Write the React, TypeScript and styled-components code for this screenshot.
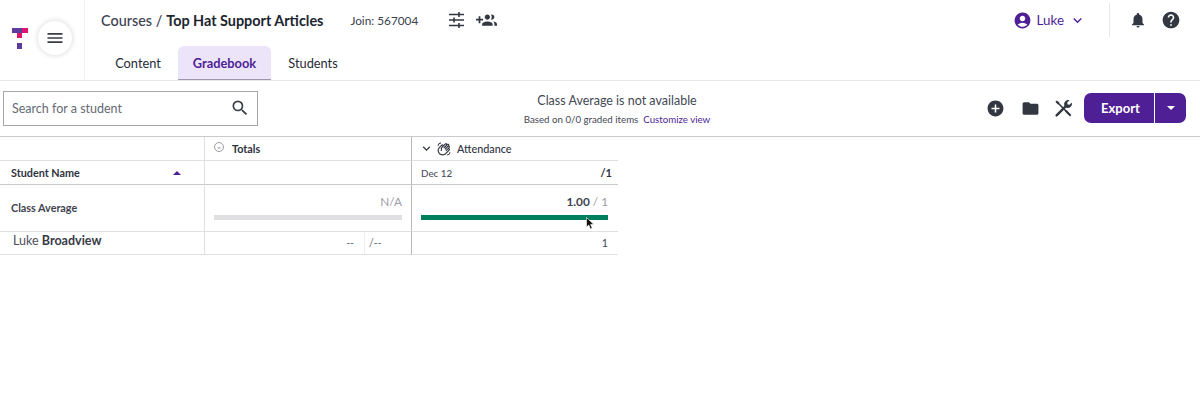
import * as React from "react"
import styled, { createGlobalStyle } from "styled-components"
import {
  MdAccountCircle,
  MdAddCircle,
  MdExpandMore,
  MdFolder,
  MdHelp,
  MdMenu,
  MdNotifications,
  MdOutlineWavingHand,
  MdSearch,
} from "react-icons/md"

const purple = "#4f1f96"
const ink = "#2e3340"
const line = "#dfe0e3"

const GlobalStyle = createGlobalStyle`
  html, body {
    margin: 0;
    background: #fff;
    color: ${ink};
    font-family: Lato, "Noto Sans", sans-serif;
  }
  * { box-sizing: border-box; }
`

const Page = styled.div`
  position: relative;
  width: 1200px;
  height: 403px;
  overflow: hidden;
`

const Header = styled.header`
  display: flex;
  height: 81px;
  border-bottom: 1px solid #e6e7ea;
`

const Brand = styled.div`
  display: flex;
  align-items: flex-start;
  width: 85px;
  padding: 20px 0 0 12px;
  border-right: 1px solid #f0f0f2;
`

const LogoSlot = styled.span`
  padding-top: 8px;
`

const MenuButton = styled.button`
  display: flex;
  align-items: center;
  justify-content: center;
  width: 36px;
  height: 36px;
  margin-left: 9px;
  padding: 0;
  border: 1px solid #eeeef0;
  border-radius: 50%;
  background: #fff;
  box-shadow: 0 0 5px rgba(0, 0, 0, 0.12);
  color: #3a3d45;
  font-size: 20px;
`

const HeaderMain = styled.div`
  flex: 1;
  display: flex;
  flex-direction: column;
`

const TopRow = styled.div`
  display: flex;
  align-items: center;
  height: 46px;
  padding: 0 19px 6px 16px;
`

const Crumb = styled.span`
  font-size: 14.4px;
  font-weight: 500;
  color: #3c4250;
`

const CourseName = styled.span`
  margin-left: 4px;
  font-size: 14.4px;
  font-weight: 700;
  color: #20242e;
`

const JoinCode = styled.span`
  margin-left: 27px;
  font-size: 11.8px;
  color: #3c4250;
`

const HeaderIcon = styled.span<{ $gap?: number; $size?: number; $color?: string }>`
  display: inline-flex;
  margin-left: ${(p) => p.$gap ?? 0}px;
  font-size: ${(p) => p.$size ?? 20}px;
  color: ${(p) => p.$color ?? "#333742"};
`

const UserMenu = styled.div`
  display: flex;
  align-items: center;
  margin-left: auto;
  color: ${purple};
  font-size: 13.4px;
  gap: 5px;
`

const Divider = styled.div`
  width: 1px;
  height: 34px;
  margin: 0 19px 0 23px;
  background: #e8e8ea;
`

const Tabs = styled.nav`
  display: flex;
  padding-left: 14px;
`

const Tab = styled.div<{ $active?: boolean; $width: number }>`
  display: flex;
  align-items: center;
  justify-content: center;
  height: 34px;
  width: ${(p) => p.$width}px;
  margin-left: ${(p) => (p.$active ? 1 : 0)}px;
  border-radius: 6px 6px 0 0;
  font-size: 12.8px;
  font-weight: ${(p) => (p.$active ? 700 : 400)};
  color: ${(p) => (p.$active ? purple : "#262a35")};
  background: ${(p) => (p.$active ? "#ece4f8" : "transparent")};
  border-bottom: ${(p) => (p.$active ? "1px solid #9d98a8" : "none")};
`

const Toolbar = styled.div`
  display: grid;
  grid-template-columns: 1fr auto 1fr;
  align-items: center;
  height: 56px;
  padding: 0 14px 1px 3px;
  border-bottom: 1px solid #c9cacd;
`

const SearchBox = styled.div`
  display: flex;
  align-items: center;
  justify-content: space-between;
  width: 255px;
  height: 35px;
  padding: 0 7px 0 8px;
  border: 1px solid #a4a6ab;
  font-size: 12.5px;
  color: #666a74;
`

const SearchIcon = styled(MdSearch)`
  font-size: 20px;
  color: #3a3d45;
`

const Summary = styled.div`
  display: flex;
  flex-direction: column;
  align-items: center;
  gap: 2px;
  margin: 1px 0 0 45px;
`

const SummaryTitle = styled.div`
  font-size: 12.5px;
  line-height: 18px;
  color: #434853;
`

const SummaryNote = styled.div`
  font-size: 9.7px;
  line-height: 14px;
  color: #434853;
`

const CustomizeLink = styled.span`
  margin-left: 5px;
  color: ${purple};
`

const Actions = styled.div`
  display: flex;
  align-items: center;
  justify-content: flex-end;
`

const ExportGroup = styled.div`
  display: flex;
  height: 30px;
  margin-left: 11px;
  border-radius: 7px;
  overflow: hidden;
  background: ${purple};
  color: #fff;
`

const ExportButton = styled.div`
  display: flex;
  align-items: center;
  justify-content: center;
  width: 71px;
  padding-left: 3px;
  border-right: 1px solid #fff;
  font-size: 13px;
  font-weight: 700;
`

const ExportCaret = styled.div`
  display: flex;
  align-items: center;
  justify-content: center;
  width: 31px;

  &::after {
    content: "";
    border-left: 4px solid transparent;
    border-right: 4px solid transparent;
    border-top: 4px solid #fff;
  }
`

const Grid = styled.div`
  display: grid;
  grid-template-columns: 205px 207px 206px;
  grid-template-rows: 24px 24px 47px 23px;
`

const Cell = styled.div<{ $strong?: boolean; $padded?: boolean }>`
  display: flex;
  align-items: center;
  min-width: 0;
  padding: ${(p) => (p.$padded ? "0 6px 0 9px" : "0")};
  border-right: 1px solid ${line};
  border-bottom: 1px solid ${(p) => (p.$strong ? "#c9cacd" : line)};

  &:nth-child(3n) {
    border-right: none;
  }
`

const GradeBorderCell = styled(Cell)`
  border-right-color: #b9babd;
`

const AverageCell = styled(GradeBorderCell)`
  padding: 0 9px;
`

const ClassScoreCell = styled(Cell)`
  padding: 0 10px 0 9px;
`

const HeaderLabel = styled.span<{ $indent?: number; $medium?: boolean }>`
  margin-left: ${(p) => p.$indent ?? 0}px;
  font-size: 10.8px;
  font-weight: ${(p) => (p.$medium ? 500 : 700)};
  color: #2e3340;
`

const SortCaret = styled.span`
  margin-left: auto;
  margin-right: 17px;
  border-left: 4px solid transparent;
  border-right: 4px solid transparent;
  border-bottom: 4px solid ${purple};
`

const TotalsIcon = styled.span`
  display: inline-flex;
  align-items: center;
  justify-content: center;
  width: 10px;
  height: 10px;
  margin: 0 8px 3px 0;
  border: 1px solid #9a9ca2;
  border-radius: 50%;
  font-size: 7px;
  line-height: 1;
  color: #9a9ca2;
`

const DateLabel = styled.span`
  font-size: 9.8px;
  font-weight: 500;
  color: #4a4e59;
`

const PointsLabel = styled.span`
  margin-left: auto;
  font-size: 11px;
  font-weight: 700;
  color: #2e3340;
`

const AverageLabel = styled.span`
  padding-left: 11px;
  margin-bottom: 1px;
  font-size: 10.8px;
  font-weight: 700;
  color: #3f4450;
`

const StudentLabel = styled.span`
  padding-left: 13px;
  margin-bottom: 6px;
  font-size: 12.5px;
  color: #4a4e59;
`

const StudentSurname = styled.span`
  font-weight: 700;
  color: #363a46;
`

const AverageBlock = styled.div`
  display: flex;
  flex-direction: column;
  width: 100%;
  gap: 4px;
  margin-bottom: 3px;
`

const AverageValue = styled.div`
  height: 18px;
  text-align: right;
  font-size: 11.8px;
  line-height: 17px;
  color: #9a9da4;
`

const AverageScore = styled.span`
  font-weight: 700;
  color: #3f4450;
`

const Bar = styled.div<{ $fill: string }>`
  height: 5px;
  background: ${(p) => p.$fill};
`

const TotalRow = styled.div`
  display: grid;
  grid-template-columns: 160px 1fr;
  width: 100%;
  height: 100%;
  font-size: 10.6px;
  color: #686c76;
`

const TotalValue = styled.span`
  display: flex;
  align-items: center;
  justify-content: flex-end;
  padding-right: 10px;
  border-right: 1px solid #ecedef;
`

const TotalMax = styled.span`
  display: flex;
  align-items: center;
  padding-left: 4px;
`

const Score = styled.span`
  margin-left: auto;
  margin-right: 4px;
  font-size: 10.6px;
  color: #434853;
`

const Cursor = styled.svg`
  position: absolute;
  left: 586px;
  top: 217px;
  width: 9px;
  height: 13px;
`

const Logo = () => (
  <svg width="16" height="21" viewBox="0 0 16 21" aria-label="Top Hat">
    <rect x="0" y="0" width="10" height="5" fill="#5d3c9d" />
    <rect x="10" y="0" width="6" height="5" fill="#e0146a" />
    <rect x="5" y="5" width="5" height="5" fill="#e0146a" />
    <rect x="5" y="15" width="5" height="6" fill="#5d3c9d" />
  </svg>
)

const TuneIcon = () => (
  <svg width="20" height="20" viewBox="0 0 20 20" stroke="currentColor" fill="none">
    <path d="M2 4.5h15M2 10h15M2 15.5h15" strokeWidth="1.6" />
    <path d="M12 2v5M7 7.5v5M12 13v5" strokeWidth="1.6" />
  </svg>
)

const GroupAddIcon = () => (
  <svg width="21" height="21" viewBox="0 0 24 24" fill="currentColor">
    <path d="M8 10H5V7H3v3H0v2h3v3h2v-3h3v-2zm10 1c1.66 0 2.99-1.34 2.99-3S19.66 5 18 5c-.32 0-.63.05-.91.14.57.81.9 1.79.9 2.86s-.34 2.04-.9 2.86c.28.09.59.14.91.14zm-5 0c1.66 0 2.99-1.34 2.99-3S14.66 5 13 5s-3 1.34-3 3 1.34 3 3 3zm6.62 2.16c.83.73 1.38 1.66 1.38 2.84v2h3v-2c0-1.54-2.37-2.49-4.38-2.84zM13 13c-2 0-6 1-6 3v2h12v-2c0-2-4-3-6-3z" />
  </svg>
)

const ToolsIcon = () => (
  <svg width="19" height="19" viewBox="0 0 19 19" fill="currentColor" stroke="currentColor">
    <path d="M2.6 16.4 L11.4 7.6" strokeWidth="2.4" strokeLinecap="round" fill="none" />
    <path d="M3 3 L15.6 15.6" strokeWidth="1.5" fill="none" />
    <path d="M1.4 2.8 L2.8 1.4 L5.6 3.8 L3.8 5.6 Z" stroke="none" />
    <path d="M12.4 11 L17.4 16 L16 17.4 L11 12.4 Z" stroke="none" />
    <path
      d="M17.8 3.4 L15.4 5.8 L13.6 5.4 L13.2 3.6 L15.6 1.2 A4.4 4.4 0 0 0 10.2 6.6 L12.4 8.8 A4.4 4.4 0 0 0 17.8 3.4 Z"
      stroke="none"
    />
  </svg>
)

export default function App() {
  return (
    <Page>
      <GlobalStyle />
      <Header>
        <Brand>
          <LogoSlot>
            <Logo />
          </LogoSlot>
          <MenuButton>
            <MdMenu />
          </MenuButton>
        </Brand>
        <HeaderMain>
          <TopRow>
            <Crumb>Courses</Crumb>
            <Crumb>&nbsp;/</Crumb>
            <CourseName>Top Hat Support Articles</CourseName>
            <JoinCode>Join: 567004</JoinCode>
            <HeaderIcon $gap={29}>
              <TuneIcon />
            </HeaderIcon>
            <HeaderIcon $gap={9}>
              <GroupAddIcon />
            </HeaderIcon>
            <UserMenu>
              <HeaderIcon $size={19} $color={purple}>
                <MdAccountCircle />
              </HeaderIcon>
              Luke
              <HeaderIcon $size={17} $color={purple}>
                <MdExpandMore />
              </HeaderIcon>
            </UserMenu>
            <Divider />
            <HeaderIcon $size={18}>
              <MdNotifications />
            </HeaderIcon>
            <HeaderIcon $gap={14} $size={20}>
              <MdHelp />
            </HeaderIcon>
          </TopRow>
          <Tabs>
            <Tab $width={78}>Content</Tab>
            <Tab $width={93} $active>
              Gradebook
            </Tab>
            <Tab $width={84}>Students</Tab>
          </Tabs>
        </HeaderMain>
      </Header>
      <Toolbar>
        <SearchBox>
          Search for a student
          <SearchIcon />
        </SearchBox>
        <Summary>
          <SummaryTitle>Class Average is not available</SummaryTitle>
          <SummaryNote>
            Based on 0/0 graded items
            <CustomizeLink>Customize view</CustomizeLink>
          </SummaryNote>
        </Summary>
        <Actions>
          <HeaderIcon $size={19}>
            <MdAddCircle />
          </HeaderIcon>
          <HeaderIcon $gap={16} $size={19}>
            <MdFolder />
          </HeaderIcon>
          <HeaderIcon $gap={14}>
            <ToolsIcon />
          </HeaderIcon>
          <ExportGroup>
            <ExportButton>Export</ExportButton>
            <ExportCaret />
          </ExportGroup>
        </Actions>
      </Toolbar>
      <Grid>
        <Cell />
        <GradeBorderCell $padded>
          <TotalsIcon>=</TotalsIcon>
          <HeaderLabel>Totals</HeaderLabel>
        </GradeBorderCell>
        <Cell $padded>
          <HeaderIcon $gap={-2} $size={15}>
            <MdExpandMore />
          </HeaderIcon>
          <HeaderIcon $gap={3} $size={14}>
            <MdOutlineWavingHand />
          </HeaderIcon>
          <HeaderLabel $indent={6} $medium>
            Attendance
          </HeaderLabel>
        </Cell>

        <Cell $strong $padded>
          <HeaderLabel $indent={2}>Student Name</HeaderLabel>
          <SortCaret />
        </Cell>
        <GradeBorderCell $strong />
        <Cell $strong $padded>
          <DateLabel>Dec 12</DateLabel>
          <PointsLabel>/1</PointsLabel>
        </Cell>

        <Cell>
          <AverageLabel>Class Average</AverageLabel>
        </Cell>
        <AverageCell>
          <AverageBlock>
            <AverageValue>N/A</AverageValue>
            <Bar $fill="#e0e0e2" />
          </AverageBlock>
        </AverageCell>
        <ClassScoreCell>
          <AverageBlock>
            <AverageValue>
              <AverageScore>1.00</AverageScore> / 1
            </AverageValue>
            <Bar $fill="#007f5f" />
          </AverageBlock>
        </ClassScoreCell>

        <Cell>
          <StudentLabel>
            Luke <StudentSurname>Broadview</StudentSurname>
          </StudentLabel>
        </Cell>
        <GradeBorderCell>
          <TotalRow>
            <TotalValue>--</TotalValue>
            <TotalMax>/--</TotalMax>
          </TotalRow>
        </GradeBorderCell>
        <Cell $padded>
          <Score>1</Score>
        </Cell>
      </Grid>
      <Cursor viewBox="0 0 9 13">
        <path d="M0.5 0.5 L0.5 10 L2.8 8 L4.4 12 L6.2 11.2 L4.6 7.4 L7.6 7.2 Z" fill="#111" stroke="#fff" strokeWidth="0.6" />
      </Cursor>
    </Page>
  )
}
